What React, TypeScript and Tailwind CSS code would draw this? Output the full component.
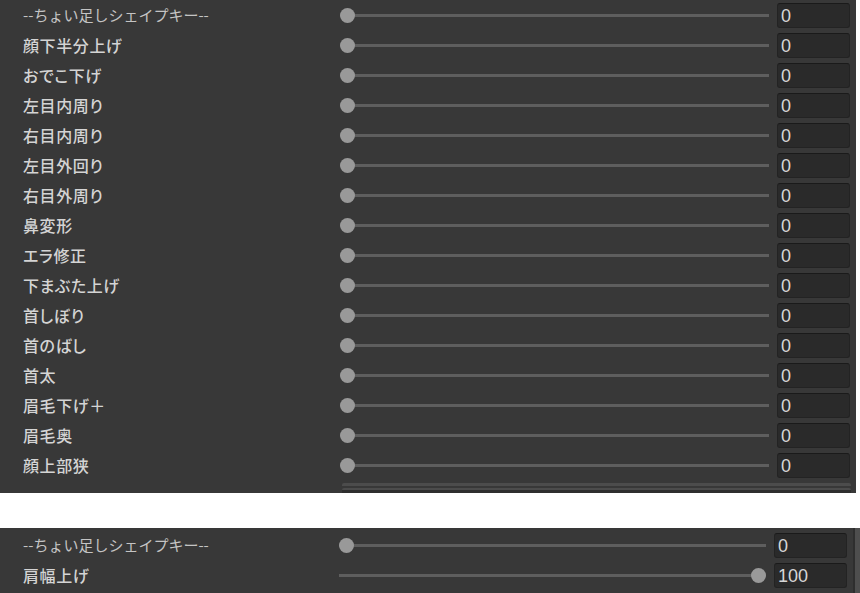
import React from "react";

type Key = { name: string; value: number; header?: boolean };

const mainKeys: Key[] = [
  { name: "--ちょい足しシェイプキー--", value: 0, header: true },
  { name: "顔下半分上げ", value: 0 },
  { name: "おでこ下げ", value: 0 },
  { name: "左目内周り", value: 0 },
  { name: "右目内周り", value: 0 },
  { name: "左目外回り", value: 0 },
  { name: "右目外周り", value: 0 },
  { name: "鼻変形", value: 0 },
  { name: "エラ修正", value: 0 },
  { name: "下まぶた上げ", value: 0 },
  { name: "首しぼり", value: 0 },
  { name: "首のばし", value: 0 },
  { name: "首太", value: 0 },
  { name: "眉毛下げ＋", value: 0 },
  { name: "眉毛奥", value: 0 },
  { name: "顔上部狭", value: 0 },
];

const lowerKeys: Key[] = [
  { name: "--ちょい足しシェイプキー--", value: 0, header: true },
  { name: "肩幅上げ", value: 100 },
];

const cjk = '"Noto Sans CJK JP", "Noto Sans", sans-serif';

function Slider({ value }: { value: number }) {
  return (
    <div className="relative flex h-[15px] flex-1 items-center">
      <div className="h-[3px] w-full bg-[#5e5e5e]" />
      <div
        className="absolute top-0 h-[15px] w-[15px] rounded-full bg-[#999999]"
        style={{ left: `calc(${value}% - ${(value / 100) * 15}px)` }}
      />
    </div>
  );
}

function Row({ k, labelWidth }: { k: Key; labelWidth: string }) {
  return (
    <div className="flex h-[30px] shrink-0 items-center pr-[6px]">
      {k.header ? (
        <div
          className={`${labelWidth} shrink-0 truncate pl-[23px] text-[15px] font-normal text-[#c4c4c4]`}
          style={{ fontFamily: cjk }}
        >
          {k.name}
        </div>
      ) : (
        <div
          className={`${labelWidth} shrink-0 truncate pl-[23px] text-[16px] font-medium tracking-[0.6px] text-[#d4d4d4]`}
          style={{ fontFamily: cjk, fontFeatureSettings: '"palt"' }}
        >
          {k.name}
        </div>
      )}
      <Slider value={k.value} />
      <div
        className="ml-[8px] flex h-[25px] w-[73px] shrink-0 items-center rounded-[3px] border border-[#232323] border-t-[#1a1a1a] bg-[#2a2a2a] pl-[3px] pt-[1px] text-[18px] leading-none text-[#d6d6d6]"
        style={{ fontFamily: '"Liberation Sans", Arial, sans-serif' }}
      >
        {k.value}
      </div>
    </div>
  );
}

export default function App() {
  return (
    <div className="h-[593px] w-[860px] overflow-hidden bg-white">
      <div className="flex h-[493px] w-[856px] flex-col overflow-hidden bg-[#383838]">
        {mainKeys.map((k, i) => (
          <Row key={i} k={k} labelWidth="w-[340px]" />
        ))}
        {/* next, clipped control */}
        <div className="ml-[342px] mr-[5px] mt-[3px] h-[4px] rounded-t-[2px] bg-[#4c4c4c]" />
        <div className="ml-[342px] mr-[5px] mt-[2px] h-[6px] rounded-t-[2px] border-t-2 border-[#4c4c4c] bg-[#2e2e2e]" />
      </div>

      <div className="mt-[35px] flex h-[65px] bg-[#383838]">
        <div className="flex flex-1 flex-col pt-[2px]">
          {lowerKeys.map((k, i) => (
            <Row key={i} k={k} labelWidth="w-[339px]" />
          ))}
        </div>
        <div className="w-[2px] bg-[#2e2e2e]" />
        <div className="w-[5px] bg-[#4e4e4e]" />
      </div>
    </div>
  );
}
